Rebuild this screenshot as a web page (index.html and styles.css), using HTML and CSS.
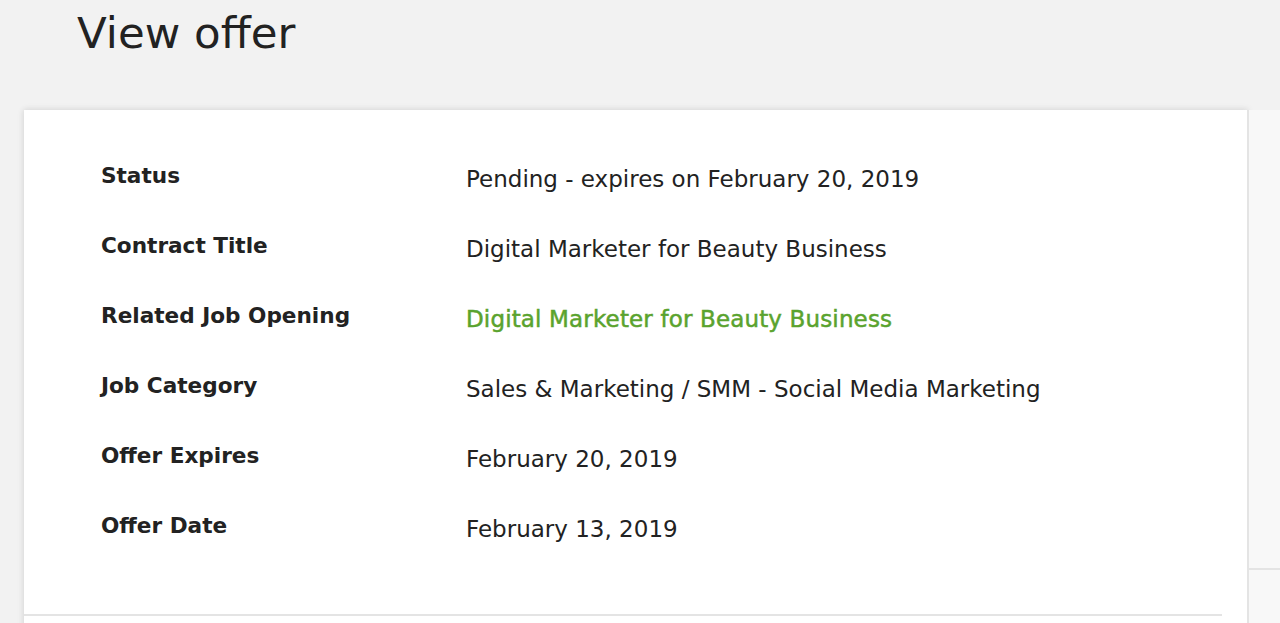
FILE: index.html
```html
<!DOCTYPE html>
<html lang="en">
<head>
<meta charset="utf-8">
<title>View offer</title>
<link rel="stylesheet" href="styles.css">
</head>
<body>
  <header class="page-header">
    <h1 class="page-title">View offer</h1>
  </header>
  <div class="layout">
    <main class="card">
      <dl class="details">
        <div class="row">
          <dt>Status</dt>
          <dd>Pending - expires on February 20, 2019</dd>
        </div>
        <div class="row">
          <dt>Contract Title</dt>
          <dd>Digital Marketer for Beauty Business</dd>
        </div>
        <div class="row">
          <dt>Related Job Opening</dt>
          <dd><a class="link" href="#">Digital Marketer for Beauty Business</a></dd>
        </div>
        <div class="row">
          <dt>Job Category</dt>
          <dd>Sales &amp; Marketing / SMM - Social Media Marketing</dd>
        </div>
        <div class="row">
          <dt>Offer Expires</dt>
          <dd>February 20, 2019</dd>
        </div>
        <div class="row">
          <dt>Offer Date</dt>
          <dd>February 13, 2019</dd>
        </div>
      </dl>
      <hr class="divider">
    </main>
    <aside class="side">
      <div class="side-top"></div>
    </aside>
  </div>
</body>
</html>
```

FILE: styles.css
```css
* { box-sizing: border-box; }

html, body {
  margin: 0;
  padding: 0;
  height: 100%;
  overflow: hidden;
}

body {
  background: #f2f2f2;
  font-family: "DejaVu Sans", "Liberation Sans", sans-serif;
  color: #222;
}

.page-header {
  padding: 5px 0 0 77px;
  height: 110px;
}

.page-title {
  margin: 0;
  font-size: 43.5px;
  font-weight: 400;
  line-height: 56px;
  color: #222;
}

.layout {
  display: flex;
  align-items: stretch;
}

.card {
  margin-left: 24px;
  width: 1225px;
  background: #fff;
  border-right: 2px solid #e4e4e4;
  box-shadow: 0 -2px 6px rgba(0, 0, 0, 0.06), -2px 0 6px rgba(0, 0, 0, 0.06);
  padding: 50px 25px 0 0;
  min-height: 520px;
}

.details {
  margin: 0;
  padding-left: 77px;
}

.row {
  display: grid;
  grid-template-columns: 365px 1fr;
  height: 70px;
}

.row dt {
  font-weight: 700;
  font-size: 21.6px;
  line-height: 30px;
  color: #222;
  margin-top: 1px;
}

.row dd {
  margin: 0;
  padding-top: 4px;
  font-size: 23px;
  line-height: 30px;
  color: #222;
}

/* medium-weight green link */
.link {
  color: #5aa32e;
  font-weight: 400;
  letter-spacing: 0.15px;
  -webkit-text-stroke: 0.5px #5aa32e;
  text-decoration: none;
}

.divider {
  border: 0;
  border-top: 2px solid #e4e4e4;
  margin: 34px 0 0 0;
}

.side {
  flex: 1;
  background: #f8f8f8;
}

.side-top {
  height: 460px;
  border-bottom: 2px solid #e4e4e4;
}
```
